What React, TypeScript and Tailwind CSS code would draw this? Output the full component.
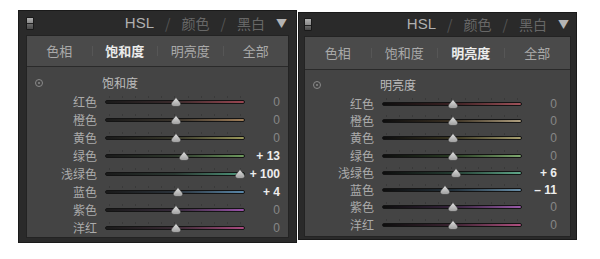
import React from "react";

type Row = { label: string; value: number; track: string };

interface PanelConfig {
  title: string;
  active: number;
  rows: Row[];
  width: string;
  height: string;
  offset: string;
  inner: string;
  header: string;
  tabs: string;
  bodyPad: string;
  rowH: string;
  labelW: string;
  valueW: string;
}

const TABS = ["色相", "饱和度", "明亮度", "全部"];

const cjk = { fontFamily: '"Noto Sans CJK SC", "Noto Sans", sans-serif' };

const leftRows: Row[] = [
  { label: "红色", value: 0, track: "bg-linear-to-r from-[#1a1a1a] via-[#3a2a2c] to-[#9a4652]" },
  { label: "橙色", value: 0, track: "bg-linear-to-r from-[#1a1a1a] via-[#3a342c] to-[#a07e58]" },
  { label: "黄色", value: 0, track: "bg-linear-to-r from-[#1a1a1a] via-[#38382a] to-[#9a985a]" },
  { label: "绿色", value: 13, track: "bg-linear-to-r from-[#1a1a1a] via-[#2e382c] to-[#6e9a5e]" },
  { label: "浅绿色", value: 100, track: "bg-linear-to-r from-[#1a1a1a] via-[#2a3832] to-[#4e9a7e]" },
  { label: "蓝色", value: 4, track: "bg-linear-to-r from-[#1a1a1a] via-[#2a323a] to-[#5a88aa]" },
  { label: "紫色", value: 0, track: "bg-linear-to-r from-[#1a1a1a] via-[#362a3a] to-[#9a52aa]" },
  { label: "洋红", value: 0, track: "bg-linear-to-r from-[#1a1a1a] via-[#3a2a34] to-[#aa4a80]" },
];

const rightRows: Row[] = [
  { label: "红色", value: 0, track: "bg-linear-to-r from-[#0e0e0e] via-[#3a2022] to-[#a0525a]" },
  { label: "橙色", value: 0, track: "bg-linear-to-r from-[#0e0e0e] via-[#3a3022] to-[#b0a080]" },
  { label: "黄色", value: 0, track: "bg-linear-to-r from-[#0e0e0e] via-[#383420] to-[#a8a070]" },
  { label: "绿色", value: 0, track: "bg-linear-to-r from-[#0e0e0e] via-[#283a22] to-[#80aa70]" },
  { label: "浅绿色", value: 6, track: "bg-linear-to-r from-[#0e0e0e] via-[#223a30] to-[#60a88a]" },
  { label: "蓝色", value: -11, track: "bg-linear-to-r from-[#0e0e0e] via-[#22303a] to-[#6a90aa]" },
  { label: "紫色", value: 0, track: "bg-linear-to-r from-[#0e0e0e] via-[#34223a] to-[#9a5aaa]" },
  { label: "洋红", value: 0, track: "bg-linear-to-r from-[#0e0e0e] via-[#3a2230] to-[#b05080]" },
];

const panels: PanelConfig[] = [
  {
    title: "饱和度",
    active: 1,
    rows: leftRows,
    width: "w-[279px]",
    height: "h-[233px]",
    offset: "mt-0",
    inner: "px-[7px] pb-[5px]",
    header: "h-[24px]",
    tabs: "h-[31px]",
    bodyPad: "pt-[9px]",
    rowH: "h-[18px]",
    labelW: "w-[70px]",
    valueW: "w-[35px]",
  },
  {
    title: "明亮度",
    active: 2,
    rows: rightRows,
    width: "w-[279px]",
    height: "h-[228px]",
    offset: "mt-[2px]",
    inner: "px-[5px] pb-[2px]",
    header: "h-[23px]",
    tabs: "h-[33px]",
    bodyPad: "pt-[8px]",
    rowH: "h-[17.3px]",
    labelW: "w-[69px]",
    valueW: "w-[35px]",
  },
];

function Thumb() {
  return (
    <svg width="11" height="10" viewBox="0 0 11 10" className="block">
      <defs>
        <linearGradient id="thumbFill" x1="0" y1="0" x2="0" y2="1">
          <stop offset="0" stopColor="#e2e2e2" />
          <stop offset="1" stopColor="#9c9c9c" />
        </linearGradient>
      </defs>
      <path d="M5.5 0.5 L8.5 4.2 Q10.5 6 10.2 7.6 Q9.8 9.5 7.5 9.5 L3.5 9.5 Q1.2 9.5 0.8 7.6 Q0.5 6 2.5 4.2 Z" fill="url(#thumbFill)" stroke="#3a3a3a" strokeWidth="0.6" />
    </svg>
  );
}

function Slider({ value, track }: { value: number; track: string }) {
  const center = 70.5 + value * 0.64;
  return (
    <div className="relative ml-[8px] h-full w-[140px] flex items-center">
      <div className="absolute left-[4px] right-[4px] top-[3px] flex justify-between">
        {Array.from({ length: 11 }).map((_, i) => (
          <span key={i} className="block h-[2px] w-px bg-[#393939]" />
        ))}
      </div>
      <div className={`h-[4px] w-full rounded-full border border-[#141414] ${track}`} />
      <div className="absolute top-1/2 -translate-x-1/2 -translate-y-1/2" style={{ left: `${center}px` }}>
        <Thumb />
      </div>
    </div>
  );
}

function Panel({ cfg }: { cfg: PanelConfig }) {
  return (
    <div className={`${cfg.width} ${cfg.height} ${cfg.offset} ${cfg.inner} flex flex-col bg-[#2a2a2a] border border-[#1a1a1a]`}>
      <div className={`${cfg.header} flex items-center shrink-0`}>
        <div className="flex h-[13px] w-[8px] flex-col overflow-hidden rounded-[1px] border border-[#1a1a1a]">
          <span className="block h-1/2 bg-linear-to-b from-[#b0b0b0] to-[#8a8a8a]" />
          <span className="block h-1/2 bg-linear-to-b from-[#6a6a6a] to-[#4a4a4a] border-t border-[#222]" />
        </div>
        <div className="ml-auto mr-[2px] flex items-center gap-[11px] text-[14px]" style={cjk}>
          <span className="text-[15px] text-[#b0b0b0]" style={{ fontFamily: '"Liberation Sans", sans-serif' }}>HSL</span>
          <span className="text-[#555]">/</span>
          <span className="text-[#676767]">颜色</span>
          <span className="text-[#555]">/</span>
          <span className="text-[#676767]">黑白</span>
          <span className="text-[11px] text-[#b4b4b4]">▼</span>
        </div>
      </div>
      <div className="flex flex-1 flex-col border border-[#232323] bg-[#444444]" style={cjk}>
        <div className={`${cfg.tabs} flex items-center shrink-0 border-b border-[#2a2a2a] bg-[#4a4a4a]`}>
          {TABS.map((t, i) => (
            <React.Fragment key={t}>
              {i > 0 && <span className="block h-[10px] w-px bg-[#565656]" />}
              <span
                className={`flex-1 text-center text-[13px] ${
                  i === cfg.active ? "font-bold text-[#ececec]" : "text-[#a9a9a9]"
                }`}
              >
                {t}
              </span>
            </React.Fragment>
          ))}
        </div>
        <div className={`${cfg.bodyPad} flex flex-col`}>
          <div className="mb-[3px] flex h-[14px] items-center">
            <span className="ml-[8px] flex h-[8px] w-[8px] items-center justify-center rounded-full border border-[#8a8a8a]">
              <span className="block h-[2px] w-[2px] rounded-full bg-[#8a8a8a]" />
            </span>
            <span className="ml-[59px] text-[12px] text-[#bcbcbc]">{cfg.title}</span>
          </div>
          {cfg.rows.map((r) => (
            <div key={r.label} className={`${cfg.rowH} flex items-center`}>
              <span className={`${cfg.labelW} text-right text-[12px] text-[#ababab]`}>{r.label}</span>
              <Slider value={r.value} track={r.track} />
              <span
                className={`${cfg.valueW} text-right text-[12px] ${
                  r.value === 0 ? "text-[#878787]" : "font-bold text-[#ededed]"
                }`}
                style={{ fontFamily: '"Liberation Sans", sans-serif' }}
              >
                {r.value === 0 ? "0" : r.value > 0 ? `+ ${r.value}` : `– ${Math.abs(r.value)}`}
              </span>
            </div>
          ))}
        </div>
      </div>
    </div>
  );
}

export default function App() {
  return (
    <div className="flex h-[259px] w-[600px] items-start gap-px bg-white pl-[18px] pt-[10px]">
      {panels.map((p) => (
        <Panel key={p.title} cfg={p} />
      ))}
    </div>
  );
}
